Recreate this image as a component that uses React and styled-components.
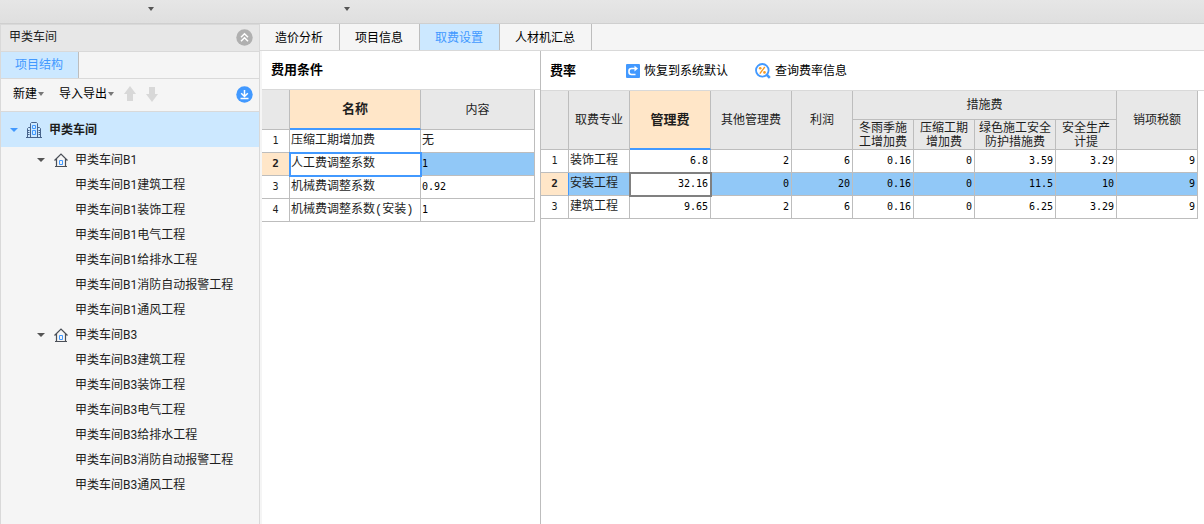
import React from 'react';
import styled, { createGlobalStyle } from 'styled-components';

const uiFont = 'Roboto, "Noto Sans CJK SC", sans-serif';
const numberFont = '"DejaVu Sans Mono", "Noto Sans CJK SC", monospace';

const GlobalStyle = createGlobalStyle`
  * {
    box-sizing: border-box;
  }

  body {
    margin: 0;
    background-color: #f5f5f5;
    color: #1e1e1e;
    font-family: ${uiFont};
    font-size: 12px;
    line-height: 16px;
  }

  button {
    margin: 0;
    padding: 0;
    border: 0;
    background: none;
    color: inherit;
    font: inherit;
    cursor: pointer;
  }
`;

const Page = styled.div`
  display: flex;
  flex-direction: column;
  min-height: 100vh;
`;

const TopBar = styled.header`
  display: flex;
  gap: 190px;
  height: 24px;
  padding: 7px 0 0 148px;
  border-bottom: 1px solid #cfcfcf;
  background: linear-gradient(#e6e6e6, #dfdfdf);
`;

const TopMenu = styled.button`
  display: flex;
  width: 6px;
  height: 5px;
`;

const Body = styled.div`
  display: flex;
  flex: 1;
`;

const Sidebar = styled.aside`
  flex: none;
  width: 260px;
  border: solid #d9d9d9;
  border-width: 0 1px;
`;

const SidebarHeader = styled.div`
  display: flex;
  align-items: center;
  justify-content: space-between;
  height: 28px;
  padding: 0 6px 2px 8px;
  border: solid #d9d9d9;
  border-width: 1px 0;
  background-color: #e7e7e7;
`;

const SidebarTabs = styled.div`
  display: flex;
  height: 27px;
  border-bottom: 1px solid #d9d9d9;
`;

const SidebarTab = styled.button`
  padding: 0 15px 0 14px;
  border-right: 1px solid #bdbdbd;
  background-color: #cce8ff;
  color: #4299ff;
`;

const Toolbar = styled.div`
  display: flex;
  align-items: center;
  height: 33px;
  padding: 0 6px 2px 12px;
  border-bottom: 1px solid #d9d9d9;
  color: #000;
`;

const ToolButton = styled.button`
  display: flex;
  align-items: center;
  gap: 1px;
  margin-right: ${({ $gap }) => $gap}px;
`;

const LocateButton = styled.button`
  display: flex;
  margin-left: auto;
`;

const Tree = styled.ul`
  margin: 0;
  padding: 0;
  list-style: none;
`;

const TreeRow = styled.div`
  display: flex;
  align-items: center;
  height: 25px;
  padding-left: ${({ $leaf }) => ($leaf ? 74 : 36)}px;
  white-space: nowrap;
`;

const RootRow = styled(TreeRow)`
  height: 35px;
  padding-left: 9px;
  background-color: #cce8ff;
  font-weight: bold;
`;

const Toggle = styled.button`
  display: flex;
  margin-right: ${({ $gap }) => $gap}px;
`;

const NodeIcon = styled.span`
  display: flex;
  margin-right: 7px;
`;

const Main = styled.main`
  display: flex;
  flex: 1;
  flex-direction: column;
  min-width: 0;
`;

const MainTabs = styled.nav`
  display: flex;
  height: 27px;
  border-bottom: 1px solid #d9d9d9;
`;

const MainTab = styled.button`
  padding: 2px 16px 0 15px;
  border-right: 1px solid #bdbdbd;
  background-color: ${({ $active }) => ($active ? '#cce8ff' : '#f5f5f5')};
  color: ${({ $active }) => ($active ? '#4299ff' : '#000')};
`;

const Panels = styled.div`
  display: flex;
  flex: 1;
  margin-left: 2px;
  background-color: #fff;
`;

const ConditionPanel = styled.section`
  flex: none;
  width: 279px;
  border-right: 1px solid #bdbdbd;
`;

const RatePanel = styled.section`
  flex: 1;
  min-width: 0;
`;

const PanelHeader = styled.div`
  display: flex;
  align-items: center;
  height: ${({ $height }) => $height}px;
  padding-left: 9px;
  border-bottom: 1px solid #d9d9d9;
  color: #000;
`;

const PanelTitle = styled.h2`
  margin: 0;
  font-size: 13px;
  line-height: 16px;
`;

const PanelAction = styled.button`
  display: flex;
  align-items: center;
  gap: 4px;
  margin-left: ${({ $gap }) => $gap}px;
`;

const Table = styled.table`
  table-layout: fixed;
  width: ${({ $width }) => $width}px;
  border-spacing: 0;
`;

const HeadCell = styled.th`
  height: ${({ $height }) => $height}px;
  padding: 0;
  border: solid #bdbdbd;
  border-width: 0 1px 1px 0;
  background-color: #e8e8e8;
  font-weight: normal;
  line-height: 14px;
`;

const ActiveHeadCell = styled(HeadCell)`
  border-bottom: 2px solid #4299ff;
  background-color: #ffe6c8;
  font-size: 13px;
  font-weight: bold;
`;

const Row = styled.tr`
  background-color: ${({ $selected }) => ($selected ? '#91c8f7' : '#fff')};
`;

const IndexCell = styled.th`
  height: 23px;
  padding: 0;
  border: solid #bdbdbd;
  border-width: 0 1px 1px 0;
  border-right-color: ${({ $marked }) => ($marked ? '#4299ff' : '#bdbdbd')};
  background-color: ${({ $selected }) => ($selected ? '#ffe6c8' : '#fff')};
  font-family: ${numberFont};
  font-size: ${({ $selected }) => ($selected ? 11 : 10)}px;
  font-weight: ${({ $selected }) => ($selected ? 'bold' : 'normal')};
`;

const Cell = styled.td`
  height: 23px;
  padding: 0 2px 0 1px;
  border: solid #bdbdbd;
  border-width: 0 1px 1px 0;
  font-family: "Liberation Mono", "Noto Sans CJK SC", monospace;
  line-height: 16px;
  white-space: nowrap;
  ${({ $outline }) =>
        $outline &&
        `
    background-color: #fff;
    outline: 2px solid ${$outline};
    outline-offset: -1px;
  `}
`;

const NumberCell = styled(Cell)`
  color: #000;
  font-family: ${numberFont};
  font-size: 10px;
  text-align: ${({ $align }) => $align || 'right'};
`;

function Caret({ color = '#555', width = 7 }) {
    return (
        <svg width={width} height="4" viewBox="0 0 8 4" preserveAspectRatio="none" aria-hidden="true">
            <path d="M0 0H8L4 4Z" fill={color} />
        </svg>
    );
}

function CollapseIcon() {
    return (
        <svg width="17" height="17" viewBox="0 0 17 17" fill="none" aria-hidden="true">
            <circle cx="8.5" cy="8.5" r="8.2" fill="#b0b0b0" />
            <path d="M5 8.2L8.5 4.8L12 8.2M5 12.2L8.5 8.8L12 12.2" stroke="#fff" strokeWidth="1.5" />
        </svg>
    );
}

function LocateIcon() {
    return (
        <svg width="17" height="17" viewBox="0 0 17 17" fill="none" aria-hidden="true">
            <circle cx="8.5" cy="8.5" r="8.2" fill="#4299ff" />
            <path d="M8.5 4V10.5M5.2 7.2L8.5 10.5L11.8 7.2M4.5 12.5H12.5" stroke="#fff" strokeWidth="1.5" />
        </svg>
    );
}

function ArrowIcon({ down }) {
    return (
        <svg width="12" height="16" viewBox="0 0 12 16" aria-hidden="true">
            <path
                d={down ? 'M3 1H9V8H12L6 16L0 8H3Z' : 'M6 0L12 8H9V15H3V8H0Z'}
                fill="#d8d8d8"
            />
        </svg>
    );
}

function BuildingIcon() {
    return (
        <svg width="16" height="16" viewBox="0 0 16 16" fill="none" stroke="#48648c" aria-hidden="true">
            <path d="M0 15.5H16M4.5 15V1.5L5.5 .5H10.5L11.5 1.5V15M4.5 5.5H2.5L1.5 6.5V15M11.5 5.5H13.5L14.5 6.5V15" />
            <path d="M1.5 8.5H3.5M1.5 10.5H3.5M1.5 12.5H3.5M12.5 8.5H14.5M12.5 10.5H14.5M12.5 12.5H14.5" />
            <path d="M6.5 3.5H9.5V6.5H6.5ZM6.5 8.5H9.5V12.5H6.5Z" stroke="#4299ff" />
        </svg>
    );
}

function HouseIcon() {
    return (
        <svg width="14" height="14" viewBox="0 0 14 14" fill="none" aria-hidden="true">
            <path d="M.5 7.5L7 1L13.5 7.5M2.5 6V13.5M11.5 6V13.5M1 13.5H13" stroke="#4a4f57" strokeWidth="1.2" />
            <path d="M5.5 7.5H8.5V11.5H5.5Z" stroke="#4299ff" />
        </svg>
    );
}

function RestoreIcon() {
    return (
        <svg width="14" height="14" viewBox="0 0 14 14" fill="none" aria-hidden="true">
            <rect width="14" height="14" rx="1" fill="#4299ff" />
            <path d="M9 4.5H5.5Q3 4.5 3 7V8Q3 10.5 5.5 10.5H9.5" stroke="#fff" strokeWidth="1.6" />
            <path d="M8.5 1.8L12 4.5L8.5 7.5Z" fill="#fff" />
        </svg>
    );
}

function QueryIcon() {
    return (
        <svg width="16" height="16" viewBox="0 0 16 16" fill="none" aria-hidden="true">
            <circle cx="7.3" cy="7.3" r="6.3" stroke="#4299ff" strokeWidth="1.8" />
            <path d="M11.5 11.5L14.8 14.8" stroke="#4299ff" strokeWidth="2.6" />
            <path d="M9.8 4L4.8 10.6" stroke="#f59a23" strokeWidth="1.4" />
            <circle cx="5.2" cy="5.2" r="1.3" fill="#f59a23" />
            <circle cx="9.5" cy="9.4" r="1.3" fill="#f59a23" />
        </svg>
    );
}

const buildings = ['甲类车间B1', '甲类车间B3'];
const projects = ['建筑工程', '装饰工程', '电气工程', '给排水工程', '消防自动报警工程', '通风工程'];
const tabs = ['造价分析', '项目信息', '取费设置', '人材机汇总'];

const conditions = [
    ['压缩工期增加费', '无'],
    ['人工费调整系数', '1'],
    ['机械费调整系数', '0.92'],
    ['机械费调整系数(安装)', '1'],
];

const rates = [
    ['装饰工程', '6.8', '2', '6', '0.16', '0', '3.59', '3.29', '9'],
    ['安装工程', '32.16', '0', '20', '0.16', '0', '11.5', '10', '9'],
    ['建筑工程', '9.65', '2', '6', '0.16', '0', '6.25', '3.29', '9'],
];
const rateColumns = [28, 61, 81, 81, 61, 61, 61, 81, 61, 81];

function ProjectTree() {
    return (
        <Tree>
            <li>
                <RootRow>
                    <Toggle $gap={8} aria-label="折叠">
                        <Caret color="#4299ff" width={8} />
                    </Toggle>
                    <NodeIcon>
                        <BuildingIcon />
                    </NodeIcon>
                    甲类车间
                </RootRow>
                <Tree>
                    {buildings.map((building) => (
                        <li key={building}>
                            <TreeRow>
                                <Toggle $gap={9} aria-label="折叠">
                                    <Caret width={8} />
                                </Toggle>
                                <NodeIcon>
                                    <HouseIcon />
                                </NodeIcon>
                                {building}
                            </TreeRow>
                            <Tree>
                                {projects.map((project) => (
                                    <li key={project}>
                                        <TreeRow $leaf>{building + project}</TreeRow>
                                    </li>
                                ))}
                            </Tree>
                        </li>
                    ))}
                </Tree>
            </li>
        </Tree>
    );
}

function ConditionTable() {
    return (
        <Table $width={273}>
            <colgroup>
                <col style={{ width: 28 }} />
                <col style={{ width: 131 }} />
                <col style={{ width: 114 }} />
            </colgroup>
            <thead>
                <tr>
                    <HeadCell $height={40} />
                    <ActiveHeadCell>名称</ActiveHeadCell>
                    <HeadCell>内容</HeadCell>
                </tr>
            </thead>
            <tbody>
                {conditions.map(([name, value], index) => {
                    const selected = index === 1;
                    const ValueCell = value === '无' ? Cell : NumberCell;
                    return (
                        <Row key={name} $selected={selected}>
                            <IndexCell $selected={selected}>{index + 1}</IndexCell>
                            <Cell $outline={selected ? '#4299ff' : null}>{name}</Cell>
                            <ValueCell $align="left">{value}</ValueCell>
                        </Row>
                    );
                })}
            </tbody>
        </Table>
    );
}

function RateTable() {
    return (
        <Table $width={657}>
            <colgroup>
                {rateColumns.map((width, index) => (
                    <col key={index} style={{ width }} />
                ))}
            </colgroup>
            <thead>
                <tr>
                    <HeadCell rowSpan={2} />
                    <HeadCell rowSpan={2}>取费专业</HeadCell>
                    <ActiveHeadCell rowSpan={2}>管理费</ActiveHeadCell>
                    <HeadCell rowSpan={2}>其他管理费</HeadCell>
                    <HeadCell rowSpan={2}>利润</HeadCell>
                    <HeadCell colSpan={4} $height={29}>措施费</HeadCell>
                    <HeadCell rowSpan={2}>销项税额</HeadCell>
                </tr>
                <tr>
                    <HeadCell $height={30}>冬雨季施<br />工增加费</HeadCell>
                    <HeadCell>压缩工期<br />增加费</HeadCell>
                    <HeadCell>绿色施工安全<br />防护措施费</HeadCell>
                    <HeadCell>安全生产<br />计提</HeadCell>
                </tr>
            </thead>
            <tbody>
                {rates.map(([name, ...values], index) => {
                    const selected = index === 1;
                    return (
                        <Row key={name} $selected={selected}>
                            <IndexCell $selected={selected} $marked={selected}>{index + 1}</IndexCell>
                            <Cell>{name}</Cell>
                            {values.map((value, column) => (
                                <NumberCell
                                    key={column}
                                    $outline={selected && column === 0 ? '#808080' : null}
                                >
                                    {value}
                                </NumberCell>
                            ))}
                        </Row>
                    );
                })}
            </tbody>
        </Table>
    );
}

function App() {
    return (
        <Page>
            <GlobalStyle />
            <TopBar>
                <TopMenu aria-label="菜单"><Caret width={6} /></TopMenu>
                <TopMenu aria-label="菜单"><Caret width={6} /></TopMenu>
            </TopBar>
            <Body>
                <Sidebar>
                    <SidebarHeader>
                        甲类车间
                        <Toggle $gap={0} aria-label="收起"><CollapseIcon /></Toggle>
                    </SidebarHeader>
                    <SidebarTabs>
                        <SidebarTab>项目结构</SidebarTab>
                    </SidebarTabs>
                    <Toolbar>
                        <ToolButton $gap={15}>新建<Caret color="#777" width={6} /></ToolButton>
                        <ToolButton $gap={10}>导入导出<Caret color="#777" width={6} /></ToolButton>
                        <ToolButton $gap={10} aria-label="上移"><ArrowIcon /></ToolButton>
                        <ToolButton $gap={0} aria-label="下移"><ArrowIcon down /></ToolButton>
                        <LocateButton aria-label="定位"><LocateIcon /></LocateButton>
                    </Toolbar>
                    <ProjectTree />
                </Sidebar>
                <Main>
                    <MainTabs>
                        {tabs.map((tab) => (
                            <MainTab key={tab} $active={tab === '取费设置'}>{tab}</MainTab>
                        ))}
                    </MainTabs>
                    <Panels>
                        <ConditionPanel>
                            <PanelHeader $height={39}>
                                <PanelTitle>费用条件</PanelTitle>
                            </PanelHeader>
                            <ConditionTable />
                        </ConditionPanel>
                        <RatePanel>
                            <PanelHeader $height={40}>
                                <PanelTitle>费率</PanelTitle>
                                <PanelAction $gap={50}><RestoreIcon />恢复到系统默认</PanelAction>
                                <PanelAction $gap={27}><QueryIcon />查询费率信息</PanelAction>
                            </PanelHeader>
                            <RateTable />
                        </RatePanel>
                    </Panels>
                </Main>
            </Body>
        </Page>
    );
}

export default App;
